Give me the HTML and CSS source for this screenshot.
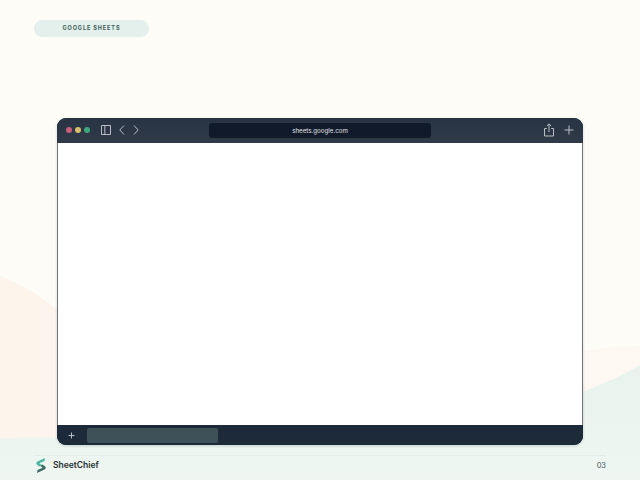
FILE: index.html
```html
<!DOCTYPE html>
<html lang="en">
<head>
<meta charset="utf-8">
<title>Google Sheets</title>
<link rel="stylesheet" href="styles.css">
</head>
<body>
<svg class="backdrop" viewBox="0 0 640 480" width="640" height="480" aria-hidden="true">
  <defs>
    <linearGradient id="mint" x1="0" y1="0" x2="0" y2="1">
      <stop offset="0" stop-color="#e8f3ee"/>
      <stop offset="1" stop-color="#eff6f2"/>
    </linearGradient>
    <linearGradient id="peach" x1="0" y1="0" x2="1" y2="0">
      <stop offset="0" stop-color="#fdf4ec"/>
      <stop offset="1" stop-color="#fdf8f2"/>
    </linearGradient>
  </defs>
  <path fill="url(#peach)" d="M0 276C40 290 75 325 110 350C200 410 480 400 580 352C600 347 620 346 640 346V480H0Z"/>
  <path fill="url(#mint)" d="M0 438C100 436 300 440 440 425C510 417 590 395 640 365V480H0Z"/>
</svg>
<main class="slide">
  <div class="pill">GOOGLE SHEETS</div>
  <section class="browser">
    <header class="toolbar">
      <div class="lights"><i class="dot red"></i><i class="dot yellow"></i><i class="dot green"></i></div>
      <svg class="icon sidebar" viewBox="0 0 12 12" width="12" height="12"><path d="M1.500 1.500h9v9h-9zM4.800 1.500v9"/></svg>
      <svg class="icon chev" viewBox="0 0 8 12" width="8" height="12"><path d="M6 1.500 1.800 6 6 10.500"/></svg>
      <svg class="icon chev next" viewBox="0 0 8 12" width="8" height="12"><path d="M2 1.500 6.200 6 2 10.500"/></svg>
      <div class="address">sheets.google.com</div>
      <svg class="icon share" viewBox="0 0 12 14" width="12" height="14"><path d="M3.800 5.500H1.500v7.500h9V5.500H8.200M6 9V1M3.800 3 6 .9 8.200 3"/></svg>
      <svg class="icon plus" viewBox="0 0 10 10" width="10" height="10"><path d="M5 .5v9M.5 5h9"/></svg>
    </header>
    <div class="viewport"></div>
    <footer class="tabs">
      <svg class="icon tab-plus" viewBox="0 0 7 7" width="7" height="7"><path d="M3.500.5v6M.5 3.500h6"/></svg>
      <div class="tab"></div>
    </footer>
  </section>
  <footer class="brand-row">
    <div class="brand">
      <svg class="logo" viewBox="0 0 12 15" width="12" height="15" aria-hidden="true">
        <path fill="#4ab5a2" d="M10 0 2.500 3.400C1 4.100.9 5.800 2.100 6.700L4.500 8.500 6.800 7 4.300 5.300 9.500 3Z"/>
        <path fill="#3d6a66" d="M2 15 9.500 11.600C11 10.900 11.100 9.200 9.900 8.300L7.500 6.500 5.200 8 7.700 9.700 2.500 12Z"/>
      </svg>
      <span class="brand-name">SheetChief</span>
    </div>
    <span class="page-no">03</span>
  </footer>
</main>
</body>
</html>
```
FILE: styles.css
```css
* { box-sizing: border-box; }
html, body { margin: 0; height: 100%; }
body {
  position: relative;
  width: 640px;
  height: 480px;
  overflow: hidden;
  background: #fdfcf6;
  font-family: Inter, "Liberation Sans", sans-serif;
}
.backdrop { position: absolute; inset: 0; display: block; }
.slide {
  position: relative;
  height: 480px;
  display: flex;
  flex-direction: column;
  padding: 20px 34px 0;
}
.pill {
  width: 115px;
  height: 17px;
  border-radius: 8.500px;
  background: #e3f0eb;
  color: #3d5c58;
  font-size: 5.500px;
  font-weight: 700;
  letter-spacing: .9px;
  line-height: 17px;
  text-align: center;
}
.browser {
  margin: 81px 23px 0 23px;
  height: 327px;
  display: flex;
  flex-direction: column;
  border-radius: 9px;
  overflow: hidden;
  background: #1c2a3a;
  box-shadow: 0 1px 3px rgba(40, 60, 60, .2);
}
.toolbar {
  height: 25px;
  flex: none;
  display: flex;
  align-items: center;
  padding: 0 7px 1px 9px;
  background: linear-gradient(#283343, #303a49);
}
.lights { display: flex; gap: 3px; margin-right: 10px; }
.dot { width: 6px; height: 6px; border-radius: 50%; }
.red { background: #c95f78; }
.yellow { background: #d8bd6a; }
.green { background: #3fa878; }
.icon { flex: none; fill: none; stroke: #b9bfc5; stroke-width: 1; }
.sidebar { margin-right: 6px; }
.chev { margin-right: 6px; }
.next { margin-right: 0; }
.address {
  width: 222px;
  height: 15px;
  margin: 0 112px 0 69px;
  border-radius: 3px;
  background: #111a2b;
  color: #e2e5e8;
  font-size: 6.200px;
  line-height: 15px;
  text-align: center;
}
.share { margin-right: 9px; }
.viewport {
  flex: 1;
  background: #fff;
  border: solid #6f7478;
  border-width: 0 1px;
}
.tabs {
  height: 20px;
  flex: none;
  display: flex;
  align-items: center;
  padding: 0 0 0 11px;
  background: #1c2a3a;
}
.tab-plus { margin-right: 12px; }
.tab {
  width: 131px;
  height: 15px;
  border-radius: 2px;
  background: #3e5158;
}
.brand-row {
  margin-top: 10px;
  padding: 0;
  border-top: 1px solid #e4eee9;
  display: flex;
  align-items: center;
  justify-content: space-between;
  height: 19px;
  width: 572px;
}
.brand { display: flex; align-items: center; gap: 6px; margin-left: 1px; }
.logo { display: block; }
.brand-name { font-size: 8.500px; font-weight: 600; color: #1f2d2f; }
.page-no { font-size: 7.500px; color: #4a5a5a; }
```
